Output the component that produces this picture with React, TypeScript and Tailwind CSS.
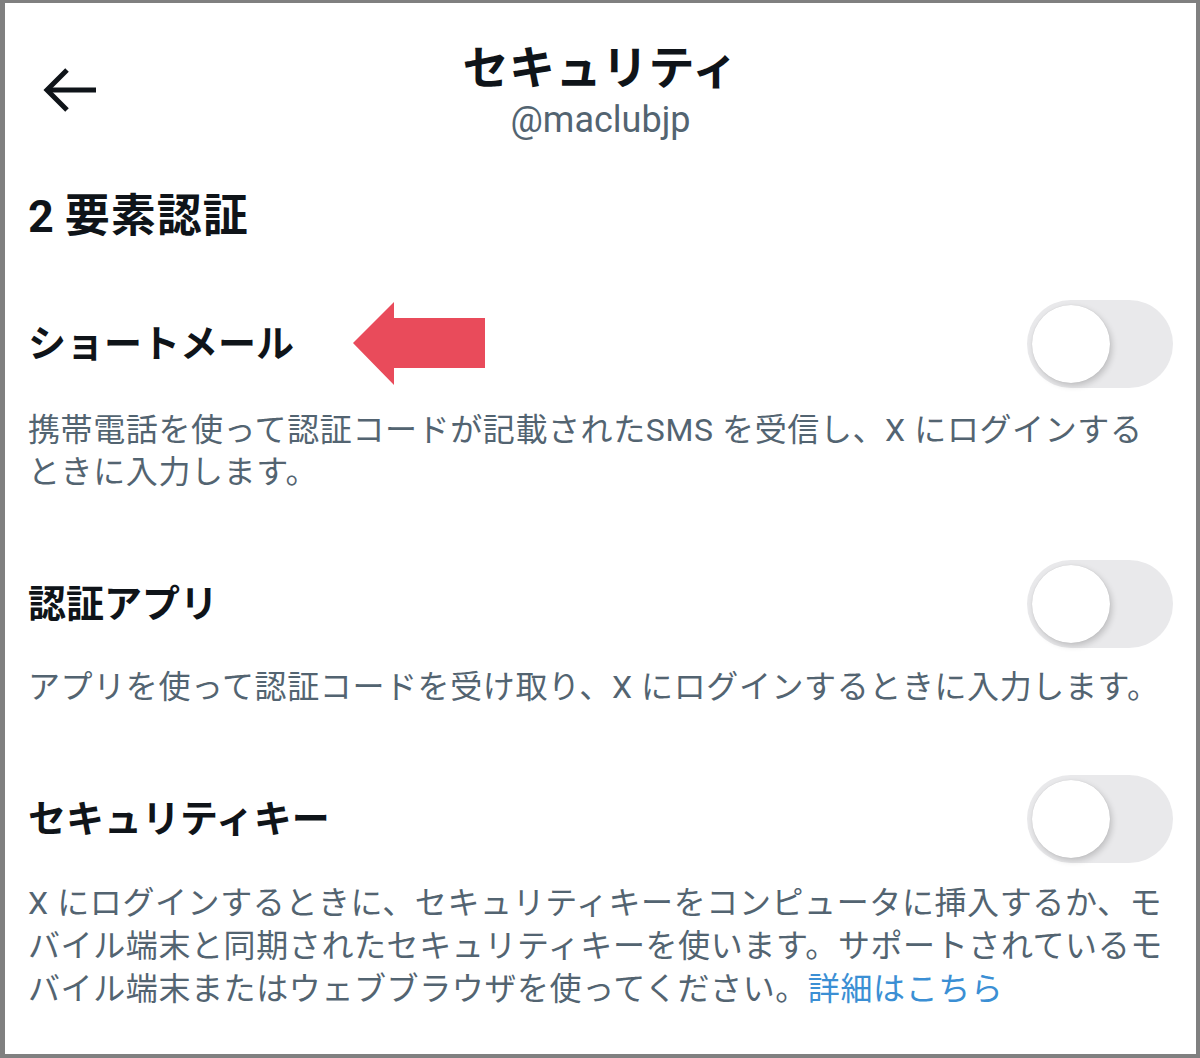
const font = { fontFamily: 'Roboto, "Noto Sans CJK JP", sans-serif' };

function BackArrow() {
    return (
        <svg width="56" height="48" viewBox="0 0 56 48" fill="none" stroke="#0f1419" strokeWidth="5">
            <path d="M4 24 H53" />
            <path d="M24 4 L4 24 L24 44" />
        </svg>
    );
}

function PointerArrow() {
    return (
        <svg width="133" height="84" viewBox="0 0 133 84" className="ml-[59px] shrink-0">
            <polygon points="0,41 41,0 41,16 132,16 132,66 41,66 41,83" fill="#e94b5b" />
        </svg>
    );
}

function Toggle() {
    return (
        <div className="flex h-[88px] w-[146px] shrink-0 items-center rounded-full bg-[#e9e9eb] px-[5px]">
            <div className="h-[78px] w-[78px] rounded-full bg-white shadow-[2px_3px_6px_rgba(0,0,0,0.18),0_0_1px_rgba(0,0,0,0.15)]" />
        </div>
    );
}

type Option = {
    title: string;
    lines: string[];
    link?: string;
    gap: string;
    leading: string;
    pointer?: boolean;
};

const options: Option[] = [
    {
        title: "ショートメール",
        lines: ["携帯電話を使って認証コードが記載されたSMS を受信し、X にログインする", "ときに入力します。"],
        gap: "mt-[21px]",
        leading: "leading-[42px]",
        pointer: true,
    },
    {
        title: "認証アプリ",
        lines: ["アプリを使って認証コードを受け取り、X にログインするときに入力します。"],
        gap: "mt-[18px]",
        leading: "leading-[42px]",
    },
    {
        title: "セキュリティキー",
        lines: [
            "X にログインするときに、セキュリティキーをコンピュータに挿入するか、モ",
            "バイル端末と同期されたセキュリティキーを使います。サポートされているモ",
            "バイル端末またはウェブブラウザを使ってください。",
        ],
        link: "詳細はこちら",
        gap: "mt-[19px]",
        leading: "leading-[43px]",
    },
];

export default function App() {
    return (
        <div
            style={font}
            className="h-[1058px] w-[1200px] overflow-hidden border-b-[4px] border-l-[5px] border-r-[4px] border-t-[3px] border-[#808080] bg-white"
        >
            {/* header */}
            <div className="flex pt-[35px]">
                <div className="w-[200px] pl-[38px] pt-[28px]">
                    <BackArrow />
                </div>
                <div className="flex flex-1 flex-col items-center">
                    <div className="h-[60px] text-[46px] font-bold leading-[60px] tracking-[0.5px] text-[#0f1419]">セキュリティ</div>
                    <div className="h-[44px] text-[36px] leading-[44px] text-[#536471]">@maclubjp</div>
                </div>
                <div className="w-[200px]" />
            </div>

            <div className="px-[23px]">
                <h1 className="mt-[45px] flex h-[60px] items-center text-[45px] font-bold leading-[60px] tracking-[1px] text-[#0f1419]">
                    <span className="mr-[10px]">2</span>
                    <span>要素認証</span>
                </h1>

                {options.map((opt, i) => (
                    <div key={opt.title} className={i === 0 ? "mt-[53px]" : "mt-[67px]"}>
                        <div className="flex h-[88px] items-center justify-between">
                            <div className="flex items-center">
                                <span className="text-[38px] font-bold text-[#0f1419]">{opt.title}</span>
                                {opt.pointer && <PointerArrow />}
                            </div>
                            <Toggle />
                        </div>
                        <div className={`${opt.gap} ${opt.leading} text-[32px] tracking-[0.6px] text-[#536471]`}>
                            {opt.lines.map((line, j) => (
                                <div key={j} className="whitespace-nowrap">
                                    {line}
                                    {opt.link && j === opt.lines.length - 1 && (
                                        <span className="text-[#3b8fd4]">{opt.link}</span>
                                    )}
                                </div>
                            ))}
                        </div>
                    </div>
                ))}
            </div>
        </div>
    );
}
